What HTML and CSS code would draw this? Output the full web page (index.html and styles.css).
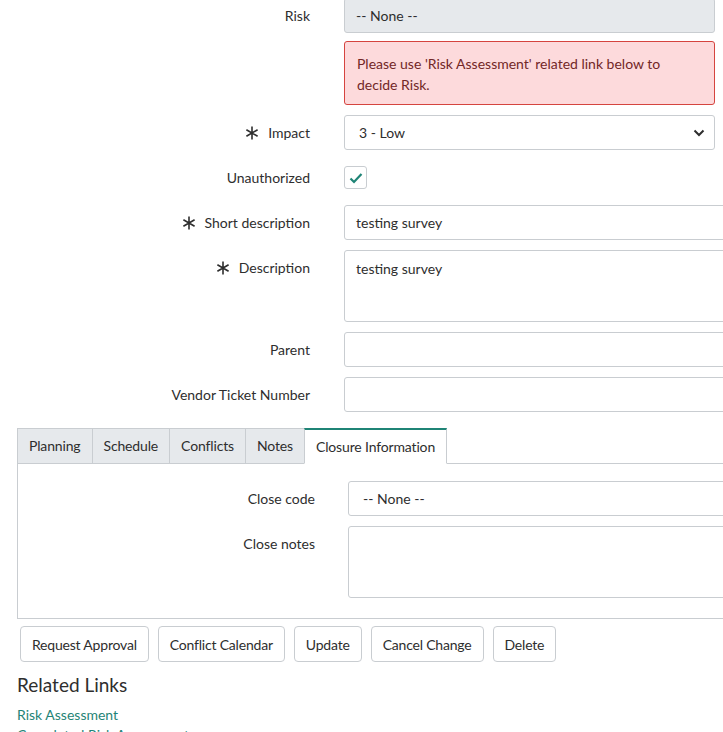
FILE: index.html
```html
<!doctype html>
<html lang="en">
    <head>
        <meta charset="UTF-8" />
        <meta name="viewport" content="width=device-width, initial-scale=1.0" />
        <title>Change Request</title>
        <link rel="stylesheet" href="styles.css">
    </head>
    <body>
        <div class="page">
            <div class="row row-risk">
                <div class="label">Risk</div>
                <div class="field field-narrow readonly">-- None --</div>
            </div>

            <div class="row">
                <div class="label"></div>
                <div class="alert">Please use 'Risk Assessment' related link below to decide Risk.</div>
            </div>

            <div class="row">
                <div class="label">
                    <svg class="req" width="14" height="14" viewBox="0 0 14 14"><path d="M7 0.5V13.5M1.4 3.75L12.6 10.25M12.6 3.75L1.4 10.25" /></svg>
                    <span>Impact</span>
                </div>
                <div class="field field-narrow select">
                    <span>3 - Low</span>
                    <svg class="chevron" width="12" height="8" viewBox="0 0 12 8"><path d="M1.5 1.5L6 6L10.5 1.5" /></svg>
                </div>
            </div>

            <div class="row">
                <div class="label">Unauthorized</div>
                <div class="check-wrap">
                    <div class="checkbox">
                        <svg width="14" height="12" viewBox="0 0 14 12"><path d="M1.5 6.5L5 10L12.5 2" /></svg>
                    </div>
                </div>
            </div>

            <div class="row">
                <div class="label">
                    <svg class="req" width="14" height="14" viewBox="0 0 14 14"><path d="M7 0.5V13.5M1.4 3.75L12.6 10.25M12.6 3.75L1.4 10.25" /></svg>
                    <span>Short description</span>
                </div>
                <div class="field field-wide">testing survey</div>
            </div>

            <div class="row">
                <div class="label">
                    <svg class="req" width="14" height="14" viewBox="0 0 14 14"><path d="M7 0.5V13.5M1.4 3.75L12.6 10.25M12.6 3.75L1.4 10.25" /></svg>
                    <span>Description</span>
                </div>
                <div class="field field-wide textarea">testing survey</div>
            </div>

            <div class="row">
                <div class="label">Parent</div>
                <div class="field field-wide"></div>
            </div>

            <div class="row">
                <div class="label">Vendor Ticket Number</div>
                <div class="field field-wide"></div>
            </div>

            <div class="tabset">
                <div class="tab-bar">
                    <div class="tab">Planning</div>
                    <div class="tab">Schedule</div>
                    <div class="tab">Conflicts</div>
                    <div class="tab">Notes</div>
                    <div class="tab active">Closure Information</div>
                    <div class="tab-fill"></div>
                </div>
                <div class="tab-panel">
                    <div class="row">
                        <div class="label label-panel">Close code</div>
                        <div class="field field-wide select-plain">-- None --</div>
                    </div>
                    <div class="row row-last">
                        <div class="label label-panel">Close notes</div>
                        <div class="field field-wide textarea"></div>
                    </div>
                </div>
            </div>

            <div class="buttons">
                <button type="button">Request Approval</button>
                <button type="button">Conflict Calendar</button>
                <button type="button">Update</button>
                <button type="button">Cancel Change</button>
                <button type="button">Delete</button>
            </div>

            <h3>Related Links</h3>
            <ul class="links">
                <li><a href="#">Risk Assessment</a></li>
                <li><a href="#">Completed Risk Assessments</a></li>
            </ul>
        </div>
    </body>
</html>
```

FILE: styles.css
```css
* {
    box-sizing: border-box;
    margin: 0;
    padding: 0;
}

body {
    font-family: Lato, 'Open Sans', sans-serif;
    font-size: 14px;
    color: #2e2e2e;
    background-color: #fff;
    overflow: hidden;
}

.page {
    width: 780px;
    padding-left: 17px;
    margin-top: -2px;
}

.row {
    display: flex;
    align-items: flex-start;
    gap: 34px;
    margin-bottom: 10px;
}

.row-risk {
    margin-bottom: 8px;
}

.label {
    width: 293px;
    height: 35px;
    display: flex;
    justify-content: flex-end;
    align-items: center;
    gap: 9px;
    white-space: nowrap;
}

.req {
    fill: none;
    stroke: #2e2e2e;
    stroke-width: 1.6;
}

.field {
    height: 35px;
    line-height: 33px;
    padding: 0 11px;
    border: 1px solid #c9cdd1;
    border-radius: 3px;
    background-color: #fff;
    white-space: nowrap;
}

.field-narrow {
    width: 371px;
}

.field-wide {
    width: 420px;
}

.readonly {
    background-color: #e6e9ec;
}

.select {
    display: flex;
    justify-content: space-between;
    align-items: center;
    padding: 0 9px 0 14px;
}

.chevron {
    fill: none;
    stroke: #2e2e2e;
    stroke-width: 2;
}

.select-plain {
    padding-left: 14px;
}

.textarea {
    height: 72px;
    line-height: 20px;
    padding-top: 8px;
}

.alert {
    width: 371px;
    height: 64px;
    padding: 11px 12px;
    line-height: 21px;
    background-color: #fddadc;
    border: 1px solid #d5443f;
    border-radius: 3px;
    color: #722727;
}

.check-wrap {
    height: 35px;
    display: flex;
    align-items: center;
}

.checkbox {
    width: 23px;
    height: 23px;
    border: 1px solid #c9cdd1;
    border-radius: 3px;
    display: flex;
    justify-content: center;
    align-items: center;
}

.checkbox svg {
    fill: none;
    stroke: #1f8476;
    stroke-width: 2.2;
}

/* tabs */
.tabset {
    margin-top: 16px;
    width: 760px;
}

.tab-bar {
    display: flex;
    height: 36px;
}

.tab {
    padding: 0 11px;
    line-height: 33px;
    letter-spacing: -0.15px;
    background-color: #e6e9ec;
    border: 1px solid #c9cdd1;
    border-right: none;
    white-space: nowrap;
}

.tab.active {
    background-color: #fff;
    border-top: 2px solid #1f8476;
    border-right: 1px solid #c9cdd1;
    border-bottom-color: #fff;
}

.tab-fill {
    flex: 1;
    border-bottom: 1px solid #c9cdd1;
}

.tab-panel {
    border: 1px solid #c9cdd1;
    border-top: none;
    padding: 17px 0 20px 0;
}

.label-panel {
    width: 297px;
}

.tab-panel .row {
    gap: 33px;
}

.tab-panel .row-last {
    margin-bottom: 0;
}

/* action buttons */
.buttons {
    display: flex;
    gap: 9px;
    margin-top: 7px;
    padding-left: 3px;
}

button {
    font-family: inherit;
    font-size: 14px;
    letter-spacing: -0.2px;
    color: #2e2e2e;
    background-color: #fff;
    height: 36px;
    padding: 0 11px;
    border: 1px solid #c9cdd1;
    border-radius: 4px;
}

h3 {
    font-size: 19px;
    font-weight: normal;
    line-height: 26px;
    margin-top: 10px;
}

.links {
    list-style: none;
    margin-top: 7px;
}

.links li {
    line-height: 20px;
}

.links a {
    color: #1f8476;
    text-decoration: none;
}
```
